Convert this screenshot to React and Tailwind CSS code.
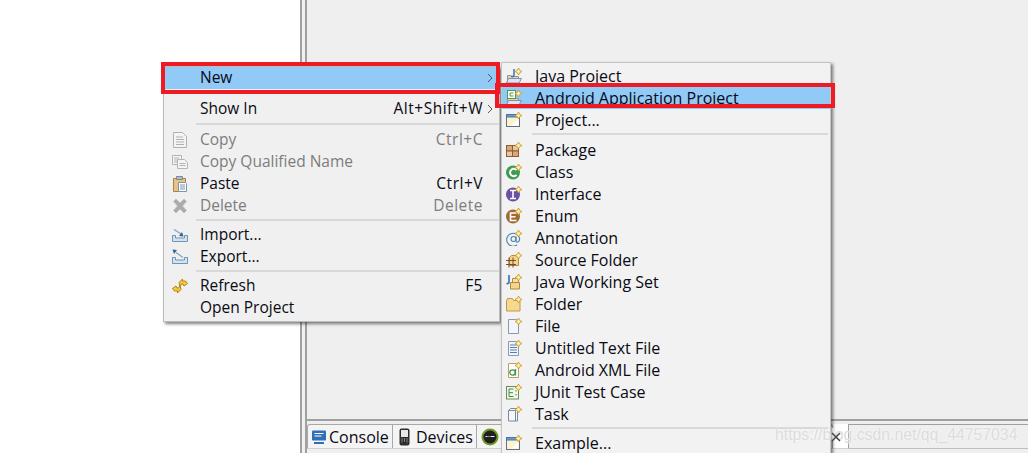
const FONT = 'font-["Open_Sans","Noto_Sans",sans-serif]';

function Spark() {
  return <path d="M12.500 0l1.200 2.300 2.300 1.200-2.300 1.200-1.200 2.300-1.200-2.300-2.300-1.200 2.300-1.200z" fill="#fdf0b0" stroke="#c9982c" strokeWidth="0.9" />;
}

const ICONS = {
  copy: (
    <g fill="#f4f4f4" stroke="#b0b0b0">
      <path d="M1.500 0.500h9l4 4v11h-13z" />
      <path d="M4 5h7M4 7.500h8M4 10h8M4 12.500h8" />
    </g>
  ),
  copyq: (
    <g fill="#f4f4f4" stroke="#b4b4b4">
      <path d="M0.500 1.500h9v9h-9z" />
      <path d="M5.500 5.500h7l3 3v6h-10z" />
      <path d="M7.500 9.500h6M7.500 11.500h6" />
      <path d="M2 4h5M2 6h3M2 8h3" />
    </g>
  ),
  paste: (
    <g>
      <path d="M1.500 2.500h12v13h-12z" fill="#e6c285" stroke="#a8834a" />
      <path d="M4.500 0.500h6v3h-6z" fill="#b5bcc6" stroke="#7f8893" />
      <path d="M6.500 6.500h7l1 1v8h-8z" fill="#fff" stroke="#7f93ad" />
      <path d="M8 9h5M8 11h5M8 13h5" stroke="#7f93ad" />
    </g>
  ),
  del: <path d="M1.500 3.500L4 1l4 4 4-4 2.500 2.500-4 4.500 4 4.500L12 15l-4-4-4 4-2.500-2.500 4-4.500z" fill="#ababab" stroke="#c0c0c0" />,
  imp: (
    <g>
      <path d="M0.500 8.500h3v2.500h9v-2.500h3v6h-15z" fill="#d5e3f1" stroke="#6f94b8" />
      <path d="M2 2.500l8 5" stroke="#7fa3c8" strokeWidth="1.200" />
      <path d="M11.500 9.500l-4.500-.5 3-4z" fill="#34618f" />
    </g>
  ),
  exp: (
    <g>
      <path d="M0.500 8.500h3v2.500h9v-2.500h3v6h-15z" fill="#d5e3f1" stroke="#6f94b8" />
      <path d="M4 3.500l7 5" stroke="#7fa3c8" strokeWidth="1.200" />
      <path d="M0.500 0.500l4.500.5-3 4z" fill="#34618f" />
    </g>
  ),
  refresh: (
    <g fill="#f6c935" stroke="#a87a10" strokeWidth="0.9">
      <path d="M7 4.500L10.500 1v2h3l2 2.500-3.500 2.500-1-2H9.500L8 8.500z" />
      <path d="M9 11.500L5.500 15v-2h-3L0.500 10.500 4 8l1 2h1.500L8 7.500z" />
    </g>
  ),
  javaProject: (
    <g>
      <path d="M1.500 7.500h3l1 1h7v6h-11z" fill="#f2d48f" stroke="#8b97a8" />
      <path d="M0.500 15l2-4.500h13L13 15z" fill="#dbe6f4" stroke="#7a90ad" />
      <path d="M8 1v6q0 2-3 1.300" fill="none" stroke="#2f6fb0" strokeWidth="1.400" />
      <Spark />
    </g>
  ),
  androidProject: (
    <g>
      <path d="M1.500 7.500h3l1 1h7v6h-11z" fill="#f2d48f" stroke="#8b97a8" />
      <path d="M0.500 15l2-4.500h13L13 15z" fill="#dbe6f4" stroke="#7a90ad" />
      <rect x="1.500" y="0.500" width="8" height="8" fill="#fff" stroke="#4d9a4d" />
      <path d="M7.500 3h-3.500v3h3.500" fill="none" stroke="#4d9a4d" />
      <Spark />
    </g>
  ),
  project: (
    <g>
      <rect x="0.500" y="2.500" width="13" height="12" fill="#fbf3cf" stroke="#5f7087" />
      <rect x="0.500" y="2.500" width="13" height="2.500" fill="#6a9bd0" stroke="#4a74a5" />
      <path d="M5 13.500l7.500-6.500v6.500z" fill="#fff" opacity="0.85" />
      <Spark />
    </g>
  ),
  pkg: (
    <g fill="#d9a87a" stroke="#8d5b3a">
      <rect x="0.500" y="3.500" width="6" height="5.500" />
      <rect x="6.500" y="3.500" width="6" height="5.500" fill="#e8c59c" />
      <rect x="0.500" y="9" width="6" height="5.500" fill="#e8c59c" />
      <rect x="6.500" y="9" width="6" height="5.500" />
      <Spark />
    </g>
  ),
  cls: (
    <g>
      <circle cx="7" cy="8.500" r="7" fill="#3f9a52" />
      <path d="M10.500 6a3.700 3.700 0 1 0 0 5" fill="none" stroke="#fff" strokeWidth="2" />
      <Spark />
    </g>
  ),
  iface: (
    <g>
      <circle cx="7" cy="8.500" r="7" fill="#6a4fa3" />
      <path d="M4 4.500h6M7 4.500v8M4 12.500h6" stroke="#fff" strokeWidth="1.600" />
      <Spark />
    </g>
  ),
  enumI: (
    <g>
      <circle cx="7" cy="8.500" r="7" fill="#a06a32" />
      <path d="M10.500 5H4.500v7.500h6M4.500 8.700h5" fill="none" stroke="#fff" strokeWidth="1.600" />
      <Spark />
    </g>
  ),
  anno: (
    <g fill="none" stroke="#4a80b0" strokeWidth="1.100">
      <circle cx="7.500" cy="9" r="2.500" />
      <path d="M10 6.500v4q0 2 2 1.500 2-1 1.500-4a6.500 6.500 0 1 0-2.500 7" />
      <Spark />
    </g>
  ),
  srcFolder: (
    <g>
      <path d="M3.500 5.500l2-2h7v10h-9z" fill="#f3d58e" stroke="#b08a3c" />
      <path d="M0 8.500h10M0 12.500h10M3 5.500v10M7 5.500v10" stroke="#7d4b25" />
      <Spark />
    </g>
  ),
  workSet: (
    <g>
      <path d="M3 1v7q0 2-2.500 1.500" fill="none" stroke="#2f6fb0" strokeWidth="1.600" />
      <path d="M6.500 4.500h6v4h-6z" fill="#f6e2ad" stroke="#b08a3c" />
      <path d="M4.500 8.500h9v6.500h-9z" fill="#f3d58e" stroke="#b08a3c" />
      <Spark />
    </g>
  ),
  folder: (
    <g>
      <path d="M0.500 5l1-2.500h5l1 2h6.500v10.500h-13.500z" fill="#f6d98f" stroke="#c09a48" />
      <Spark />
    </g>
  ),
  file: (
    <g>
      <path d="M2.500 1.500h8l2 2v12h-10z" fill="#f2f6fc" stroke="#8d99a8" />
      <Spark />
    </g>
  ),
  textFile: (
    <g>
      <path d="M2.500 1.500h8l2 2v12h-10z" fill="#f2f6fc" stroke="#8d99a8" />
      <path d="M4 5h7M4 7.500h7M4 10h7M4 12.500h7" stroke="#4f7fb5" />
      <Spark />
    </g>
  ),
  xmlFile: (
    <g>
      <path d="M2.500 1.500h8l2 2v12h-10z" fill="#fff" stroke="#c99a60" />
      <circle cx="6.500" cy="10.500" r="2.700" fill="none" stroke="#3d9a4f" strokeWidth="1.300" />
      <path d="M9.500 7v6.500" stroke="#3d9a4f" strokeWidth="1.300" />
      <Spark />
    </g>
  ),
  junit: (
    <g>
      <rect x="0.500" y="2.500" width="12" height="12.500" fill="#f2f7e8" stroke="#6f8a5a" />
      <path d="M7.500 5H3v7.500h4.500M3 8.700h4M10 6v1.500M10 10v1.500" fill="none" stroke="#3d8a4f" />
      <Spark />
    </g>
  ),
  task: (
    <g>
      <path d="M2.500 4.500l2-2h7v12.500h-9z" fill="#f4f7fb" stroke="#7d8a9a" />
      <path d="M2.500 4.500h7v10.500" fill="none" stroke="#7d8a9a" />
      <Spark />
    </g>
  ),
};

function Icon({ name }) {
  return (
    <svg width="16" height="16" viewBox="0 0 16 16" className="shrink-0">
      {ICONS[name]}
    </svg>
  );
}

function Chevron() {
  return (
    <svg width="6" height="10" viewBox="0 0 6 10" className="absolute right-[6px] top-[6px]">
      <path d="M1 1l4 4-4 4" fill="none" stroke="#555" strokeWidth="1" />
    </svg>
  );
}

function LeftRow({ icon, label, keys, off, sub, active }) {
  const color = off ? 'text-[#7d7d7d]' : 'text-[#0a0a14]';
  return (
    <div className={`relative flex items-center h-[22px] pl-[8px] ${active ? 'bg-[#91c9f7]' : ''}`}>
      <span className="w-[28px] flex">{icon && <Icon name={icon} />}</span>
      <span className={color}>{label}</span>
      {keys && <span className={`ml-auto mr-[16px] tracking-[0.5px] ${color}`}>{keys}</span>}
      {sub && <Chevron />}
    </div>
  );
}

function RightRow({ icon, label, active }) {
  return (
    <div className={`flex items-center h-[22px] pl-[4px] ${active ? 'bg-[#91c9f7]' : ''}`}>
      <span className="w-[29px] flex">
        <Icon name={icon} />
      </span>
      <span className="text-[#0a0a14]">{label}</span>
    </div>
  );
}

function ContextMenu() {
  return (
    <div className="absolute left-[163px] top-[66px] w-[337px] h-[256px] bg-[#f0f0f0] border border-[#bcbcbc] shadow-[2px_2px_3px_rgba(0,0,0,0.5)]">
      <LeftRow label="New" sub active />
      <div className="h-[9px]" />
      <LeftRow label="Show In" keys="Alt+Shift+W" sub />
      <div className="h-[2px] mt-[3px] mb-[4px] ml-[32px] bg-[#d9d9d9]" />
      <LeftRow icon="copy" label="Copy" keys="Ctrl+C" off />
      <LeftRow icon="copyq" label="Copy Qualified Name" off />
      <LeftRow icon="paste" label="Paste" keys="Ctrl+V" />
      <LeftRow icon="del" label="Delete" keys="Delete" off />
      <div className="h-[2px] mt-[2px] mb-[3px] ml-[32px] bg-[#d9d9d9]" />
      <LeftRow icon="imp" label="Import..." />
      <LeftRow icon="exp" label="Export..." />
      <div className="h-[2px] mt-[2px] mb-[3px] ml-[32px] bg-[#d9d9d9]" />
      <LeftRow icon="refresh" label="Refresh" keys="F5" />
      <LeftRow label="Open Project" />
    </div>
  );
}

function NewMenu() {
  return (
    <div className="absolute left-[501px] top-[62px] w-[330px] h-[391px] overflow-hidden bg-[#f2f2f2] border border-[#c4c4c4] border-b-0 text-[16px] shadow-[2px_2px_3px_rgba(0,0,0,0.5)] pt-[2px]">
      <RightRow icon="javaProject" label="Java Project" />
      <RightRow icon="androidProject" label="Android Application Project" active />
      <RightRow icon="project" label="Project..." />
      <div className="h-[2px] mt-[2px] mb-[4px] ml-[30px] mr-[2px] bg-[#d9d9d9]" />
      <RightRow icon="pkg" label="Package" />
      <RightRow icon="cls" label="Class" />
      <RightRow icon="iface" label="Interface" />
      <RightRow icon="enumI" label="Enum" />
      <RightRow icon="anno" label="Annotation" />
      <RightRow icon="srcFolder" label="Source Folder" />
      <RightRow icon="workSet" label="Java Working Set" />
      <RightRow icon="folder" label="Folder" />
      <RightRow icon="file" label="File" />
      <RightRow icon="textFile" label="Untitled Text File" />
      <RightRow icon="xmlFile" label="Android XML File" />
      <RightRow icon="junit" label="JUnit Test Case" />
      <RightRow icon="task" label="Task" />
      <div className="h-[2px] mt-[2px] mb-[3px] ml-[30px] mr-[2px] bg-[#d9d9d9]" />
      <RightRow icon="project" label="Example..." />
    </div>
  );
}

function TabStrip() {
  return (
    <div className="h-[34px] flex flex-col">
      <div className="h-[2px] bg-[#a0a0a0]" />
      <div className="h-[3px]" />
      <div className="h-[24px] flex items-stretch">
        <div className="w-[526px] flex items-center h-full bg-[#f4f4f4] border border-[#a8a8a8] border-b-0 rounded-t-[3px] text-[16px] text-[#0a0a14]">
          <div className="flex items-center gap-[2px] h-full pl-[3px] w-[85px] border-r border-[#a8a8a8]">
            <svg width="16" height="16" viewBox="0 0 16 16">
              <rect x="1" y="1.500" width="14" height="10" rx="1" fill="#2f6fb8" />
              <path d="M3.500 4.500h9M3.500 7h7" stroke="#fff" />
              <path d="M3 14h10" stroke="#2f6fb8" strokeWidth="2" />
            </svg>
            <span>Console</span>
          </div>
          <div className="flex items-center gap-[6px] h-full pl-[6px] w-[84px] border-r border-[#a8a8a8]">
            <svg width="11" height="18" viewBox="0 0 11 18">
              <rect x="0.500" y="0.500" width="10" height="17" rx="2" fill="#2c2c2c" />
              <rect x="2" y="2" width="7" height="7" fill="#e8e8e8" />
              <path d="M2.500 11h1M5 11h1M7.500 11h1M2.500 13h1M5 13h1M7.500 13h1" stroke="#d8d8d8" />
              <path d="M2.500 15h1" stroke="#d33" />
              <path d="M7.500 15h1" stroke="#3a3" />
            </svg>
            <span>Devices</span>
          </div>
          <div className="pl-[4px] flex items-center">
            <svg width="18" height="18" viewBox="0 0 18 18">
              <circle cx="9" cy="9" r="8.500" fill="#6f9a22" />
              <circle cx="9" cy="9" r="6.500" fill="#1f1f1f" />
              <path d="M4.500 8.500h2M7.500 8.500h1M9.500 8.500h4" stroke="#eee" />
            </svg>
          </div>
        </div>
        <div className="w-[15px] bg-white" />
        <div className="flex-1 border-t border-l border-[#a0a0a0]" />
      </div>
      <div className="flex-1 flex">
        <div className="w-[541px] border-t border-[#d0d0d0]" />
        <div className="flex-1 border-t border-[#c0c0c0]" />
      </div>
    </div>
  );
}

export default function App() {
  return (
    <div className={`relative w-[1028px] h-[453px] overflow-hidden flex bg-white text-[15.5px] ${FONT}`}>
      <div className="w-[300px] bg-white" />
      <div className="w-[2px] bg-[#a0a0a0]" />
      <div className="w-[3px] bg-[#f0f0f0]" />
      <div className="w-[2px] bg-[#a0a0a0]" />
      <div className="flex-1 flex flex-col justify-end bg-[#efefef]">
        <TabStrip />
      </div>

      <ContextMenu />
      <NewMenu />

      {/* red annotation boxes drawn on top of the screenshot */}
      <div className="absolute left-[161px] top-[62px] w-[339px] h-[32px] border-[4px] border-[#ed1c24]" />
      <div className="absolute left-[495px] top-[83px] w-[340px] h-[25px] border-[4px] border-[#ed1c24]" />

      <span className="absolute left-[775px] top-[426px] text-[15.8px] leading-[18px] text-[#dcdcdc] [text-shadow:0_0_2px_white] font-['Liberation_Sans',sans-serif]">
        https://blog.csdn.net/qq_44757034
      </span>
      <svg width="10" height="10" viewBox="0 0 10 10" className="absolute left-[831px] top-[432px]">
        <path d="M1 1l8 8M9 1l-8 8" stroke="#444" strokeWidth="1.500" fill="none" />
      </svg>
    </div>
  );
}
